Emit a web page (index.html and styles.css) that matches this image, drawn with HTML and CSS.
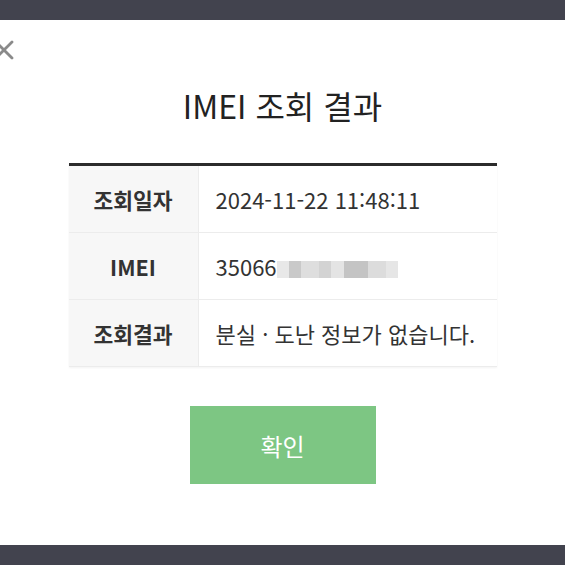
FILE: index.html
```html
<!DOCTYPE html>
<html lang="ko">

<head>
    <meta charset="UTF-8">
    <meta name="viewport" content="width=device-width, initial-scale=1.0">
    <title>IMEI 조회 결과</title>
    <link rel="stylesheet" href="styles.css">
</head>

<body>
    <div class="backdrop-top"></div>
    <div class="modal">
        <button class="close" aria-label="닫기">
            <svg width="20" height="20" viewBox="0 0 20 20">
                <path d="M2 2 L18 18 M18 2 L2 18" stroke="#8a8a8a" stroke-width="2.8" stroke-linecap="round" fill="none" />
            </svg>
        </button>
        <h1>IMEI 조회 결과</h1>
        <table class="result">
            <tr>
                <th>조회일자</th>
                <td>2024-11-22 11:48:11</td>
            </tr>
            <tr>
                <th>IMEI</th>
                <td>35066<span class="masked"></span></td>
            </tr>
            <tr>
                <th>조회결과</th>
                <td>분실 · 도난 정보가 없습니다.</td>
            </tr>
        </table>
        <div class="actions">
            <button class="confirm">확인</button>
        </div>
    </div>
    <div class="backdrop-bottom"></div>
</body>

</html>
```

FILE: styles.css
```css
html,
body {
    margin: 0;
    height: 100%;
}

body {
    display: flex;
    flex-direction: column;
    font-family: "Noto Sans CJK KR", "Noto Sans", sans-serif;
    background-color: #42434e;
    color: #222;
}

.backdrop-top,
.backdrop-bottom {
    height: 20px;
    flex: none;
}

.modal {
    flex: 1;
    position: relative;
    background-color: #fff;
    display: flex;
    flex-direction: column;
    align-items: center;
}

.close {
    position: absolute;
    left: -6px;
    top: 20px;
    padding: 0;
    border: 0;
    background: none;
    line-height: 0;
}

h1 {
    margin: 63px 0 0;
    font-size: 32px;
    font-weight: 400;
    line-height: 44px;
    color: #222;
}

.result {
    margin-top: 36px;
    width: 428px;
    border-collapse: collapse;
    border-top: 3px solid #2b2b2b;
    box-shadow: 0 1px 2px rgba(0, 0, 0, 0.05);
}

.result th,
.result td {
    height: 66px;
    border-bottom: 1px solid #ececec;
    padding: 0;
}

.result th {
    width: 129px;
    background-color: #f7f7f7;
    border-right: 1px solid #ececec;
    font-size: 21.5px;
    font-weight: 700;
    color: #333;
}

.result td {
    padding-left: 17px;
    font-size: 22px;
    color: #333;
    text-align: left;
}

.masked {
    display: inline-block;
    vertical-align: -2px;
    width: 121px;
    height: 17px;
    background:
        linear-gradient(90deg, #e8e8e8 0 10%, #c9c9c9 10% 20%, #dedede 20% 35%, #d3d3d3 35% 45%, #e4e4e4 45% 55%, #c4c4c4 55% 75%, #dcdcdc 75% 90%, #e6e6e6 90%);
}

.actions {
    margin-top: 39px;
}

.confirm {
    width: 186px;
    height: 78px;
    border: 0;
    background-color: #7dc683;
    color: #fff;
    font-family: inherit;
    font-size: 24px;
}
```
